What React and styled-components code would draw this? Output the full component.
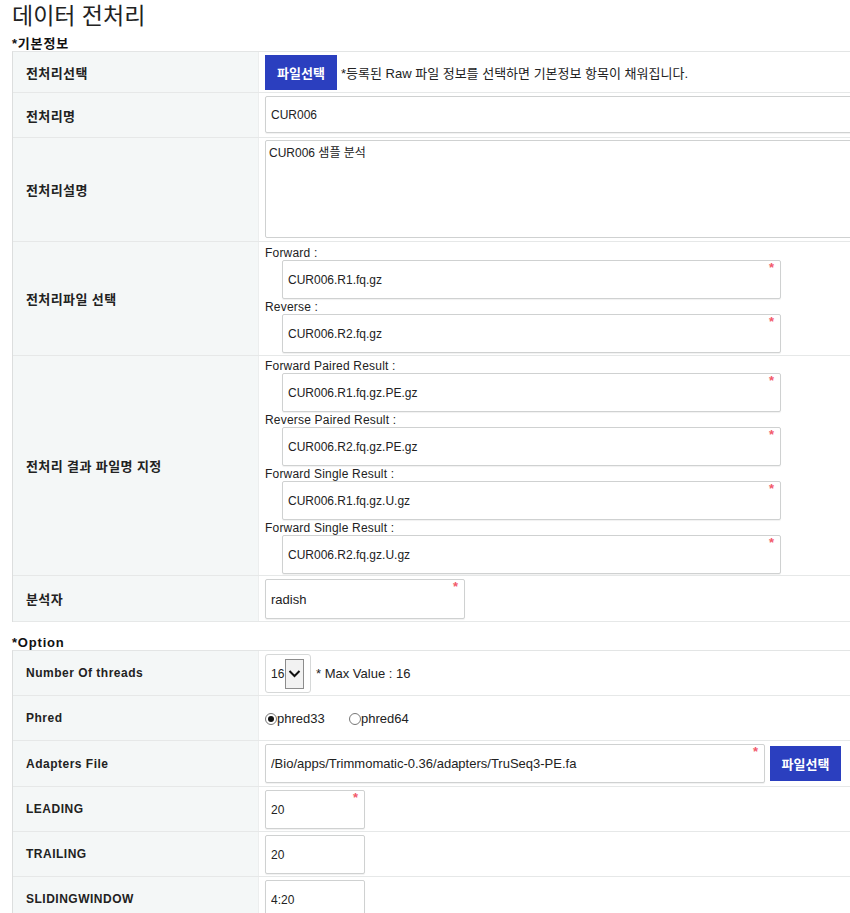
import React from 'react';
import styled, { createGlobalStyle } from 'styled-components';

const GlobalStyle = createGlobalStyle`
  html, body {
    margin: 0;
    padding: 0;
    background: #ffffff;
    overflow: hidden;
  }
  body {
    font-family: 'Liberation Sans', 'Noto Sans CJK KR', sans-serif;
    font-size: 12px;
    color: #222222;
  }
`;

const Page = styled.div`
  padding: 0 12px;
  width: 880px;
`;

const Title = styled.h2`
  margin: 0;
  padding-top: 1px;
  font-size: 23px;
  line-height: 30px;
  font-weight: 400;
  color: #222222;
`;

const SectionTitle = styled.h3`
  margin: ${p => p.top || '6px'} 0 0;
  font-size: 13px;
  line-height: 15px;
  font-weight: 700;
  letter-spacing: 0.8px;
  color: #111111;
`;

const Table = styled.div`
  border-top: 1px solid #e3e5e5;
  border-left: 1px solid #dcdede;
`;

const Row = styled.div`
  display: grid;
  grid-template-columns: 246px 1fr;
  border-bottom: 1px solid #e6e8e8;
`;

const Label = styled.div`
  display: flex;
  align-items: center;
  padding-left: 13px;
  background: #f4f7f7;
  border-right: 1px solid #eceeee;
  font-size: ${p => (p.latin ? '12px' : '13px')};
  font-weight: 700;
  color: #222222;
  letter-spacing: ${p => (p.latin ? '0.5px' : '0.4px')};
`;

const Cell = styled.div`
  display: flex;
  flex-direction: ${p => (p.stack ? 'column' : 'row')};
  align-items: ${p => (p.stack ? 'stretch' : 'center')};
  gap: ${p => p.gap || '0'};
  padding: ${p => p.pad || '3px 0 3px 6px'};
  background: #ffffff;
`;

const BlueButton = styled.button`
  width: ${p => p.w || '72px'};
  height: 35px;
  padding: 0;
  border: none;
  background: #2b3fbf;
  color: #ffffff;
  font-family: inherit;
  font-size: 13px;
  font-weight: 700;
  cursor: pointer;
  flex-shrink: 0;
`;

const Hint = styled.span`
  margin-left: 4px;
  font-size: 13px;
  color: #222222;
`;

const InputWrap = styled.div`
  position: relative;
  width: ${p => p.w || '100%'};
  margin-left: ${p => p.indent || '0'};
  flex-shrink: 0;
`;

const Input = styled.input`
  box-sizing: border-box;
  display: block;
  width: 100%;
  height: ${p => p.h || '37px'};
  padding: 0 5px;
  border: 1px solid #cfd1d1;
  border-radius: 2px;
  box-shadow: 0 1px 1px rgba(0, 0, 0, 0.06);
  font-family: inherit;
  font-size: ${p => p.fs || '12px'};
  color: #222222;
  background: #ffffff;
  outline: none;
`;

const TextArea = styled.textarea`
  box-sizing: border-box;
  display: block;
  width: 100%;
  height: 98px;
  padding: 2px 3px;
  border: 1px solid #cfd1d1;
  border-radius: 2px;
  font-family: inherit;
  font-size: 12px;
  color: #222222;
  resize: none;
  outline: none;
`;

const Required = styled.span`
  position: absolute;
  top: 1px;
  right: 7px;
  font-size: 13px;
  font-weight: 700;
  line-height: 13px;
  color: #f25a6a;
  pointer-events: none;
`;

const FieldLabel = styled.div`
  box-sizing: border-box;
  height: 14px;
  line-height: 14px;
  padding-top: 1px;
  font-size: 12px;
  letter-spacing: 0.2px;
  color: #222222;
`;

const FileField = styled.div`
  display: flex;
  flex-direction: column;
  gap: 1px;
`;

const Select = styled.div`
  box-sizing: border-box;
  display: flex;
  align-items: center;
  width: 46px;
  height: 39px;
  padding: 0 5px;
  border: 1px solid #d6d8d8;
  border-radius: 3px;
  font-size: 12px;
  color: #222222;
`;

const SelectArrow = styled.span`
  box-sizing: border-box;
  display: flex;
  align-items: center;
  justify-content: center;
  width: 19px;
  height: 30px;
  margin-left: 1px;
  border: 1px solid #8c8c8c;
  background: #f2f2f2;
`;

const Note = styled.span`
  margin-left: 5px;
  font-size: 13px;
  color: #222222;
`;

const RadioGroup = styled.label`
  display: flex;
  align-items: center;
  width: 84px;
  font-size: 13px;
  color: #222222;
`;

const RadioDot = styled.span`
  box-sizing: border-box;
  display: inline-flex;
  align-items: center;
  justify-content: center;
  width: 12px;
  height: 12px;
  border: 1px solid #777777;
  border-radius: 50%;
  background: #ffffff;

  &::after {
    content: '';
    width: 6px;
    height: 6px;
    border-radius: 50%;
    background: ${p => (p.checked ? '#111111' : 'transparent')};
  }
`;

const Field = ({ value, w, indent, h, fs, required = true }) => (
  <InputWrap w={w} indent={indent}>
    <Input defaultValue={value} h={h} fs={fs} />
    {required && <Required>*</Required>}
  </InputWrap>
);

const fileInputs = [
  { label: 'Forward :', value: 'CUR006.R1.fq.gz' },
  { label: 'Reverse :', value: 'CUR006.R2.fq.gz' },
];

const resultInputs = [
  { label: 'Forward Paired Result :', value: 'CUR006.R1.fq.gz.PE.gz' },
  { label: 'Reverse Paired Result :', value: 'CUR006.R2.fq.gz.PE.gz' },
  { label: 'Forward Single Result :', value: 'CUR006.R1.fq.gz.U.gz' },
  { label: 'Forward Single Result :', value: 'CUR006.R2.fq.gz.U.gz' },
];

const FileList = ({ items, pad }) => (
  <Cell stack pad={pad}>
    {items.map((it, i) => (
      <FileField key={i}>
        <FieldLabel>{it.label}</FieldLabel>
        <Field value={it.value} w="499px" indent="17px" h="39px" />
      </FileField>
    ))}
  </Cell>
);

const App = () => (
  <Page>
    <GlobalStyle />
    <Title>데이터 전처리</Title>
    <SectionTitle top="5px">*기본정보</SectionTitle>
    <Table>
      <Row>
        <Label>전처리선택</Label>
        <Cell pad="3px 0 2px 6px">
          <BlueButton>파일선택</BlueButton>
          <Hint>*등록된 Raw 파일 정보를 선택하면 기본정보 항목이 채워집니다.</Hint>
        </Cell>
      </Row>
      <Row>
        <Label>전처리명</Label>
        <Cell pad="3px 0 4px 6px">
          <Field value="CUR006" required={false} />
        </Cell>
      </Row>
      <Row>
        <Label>전처리설명</Label>
        <Cell pad="2px 0 3px 6px">
          <TextArea defaultValue="CUR006 샘플 분석" />
        </Cell>
      </Row>
      <Row>
        <Label>전처리파일 선택</Label>
        <FileList items={fileInputs} pad="3px 0 2px 6px" />
      </Row>
      <Row>
        <Label>전처리 결과 파일명 지정</Label>
        <FileList items={resultInputs} pad="2px 0 1px 6px" />
      </Row>
      <Row>
        <Label>분석자</Label>
        <Cell pad="3px 0 2px 6px">
          <Field value="radish" w="200px" h="40px" fs="13px" />
        </Cell>
      </Row>
    </Table>

    <SectionTitle top="13px">*Option</SectionTitle>
    <Table>
      <Row>
        <Label latin>Number Of threads</Label>
        <Cell pad="3px 0 2px 6px">
          <Select>
            16
            <SelectArrow>
              <svg width="13" height="9" viewBox="0 0 13 9">
                <path d="M1.5 2 L6.5 7 L11.5 2" fill="none" stroke="#111" strokeWidth="2" />
              </svg>
            </SelectArrow>
          </Select>
          <Note>* Max Value : 16</Note>
        </Cell>
      </Row>
      <Row>
        <Label latin>Phred</Label>
        <Cell pad="3px 0 2px 6px" style={{ height: 39 }}>
          <RadioGroup>
            <RadioDot checked />
            phred33
          </RadioGroup>
          <RadioGroup>
            <RadioDot />
            phred64
          </RadioGroup>
        </Cell>
      </Row>
      <Row>
        <Label latin>Adapters File</Label>
        <Cell pad="3px 0 3px 6px" gap="5px">
          <Field value="/Bio/apps/Trimmomatic-0.36/adapters/TruSeq3-PE.fa" w="500px" h="39px" fs="13px" />
          <BlueButton w="71px">파일선택</BlueButton>
        </Cell>
      </Row>
      <Row>
        <Label latin>LEADING</Label>
        <Cell pad="3px 0 2px 6px">
          <Field value="20" w="100px" h="39px" />
        </Cell>
      </Row>
      <Row>
        <Label latin>TRAILING</Label>
        <Cell pad="3px 0 2px 6px">
          <Field value="20" w="100px" h="39px" required={false} />
        </Cell>
      </Row>
      <Row>
        <Label latin>SLIDINGWINDOW</Label>
        <Cell pad="3px 0 2px 6px">
          <Field value="4:20" w="100px" h="39px" required={false} />
        </Cell>
      </Row>
    </Table>
  </Page>
);

export default App;
